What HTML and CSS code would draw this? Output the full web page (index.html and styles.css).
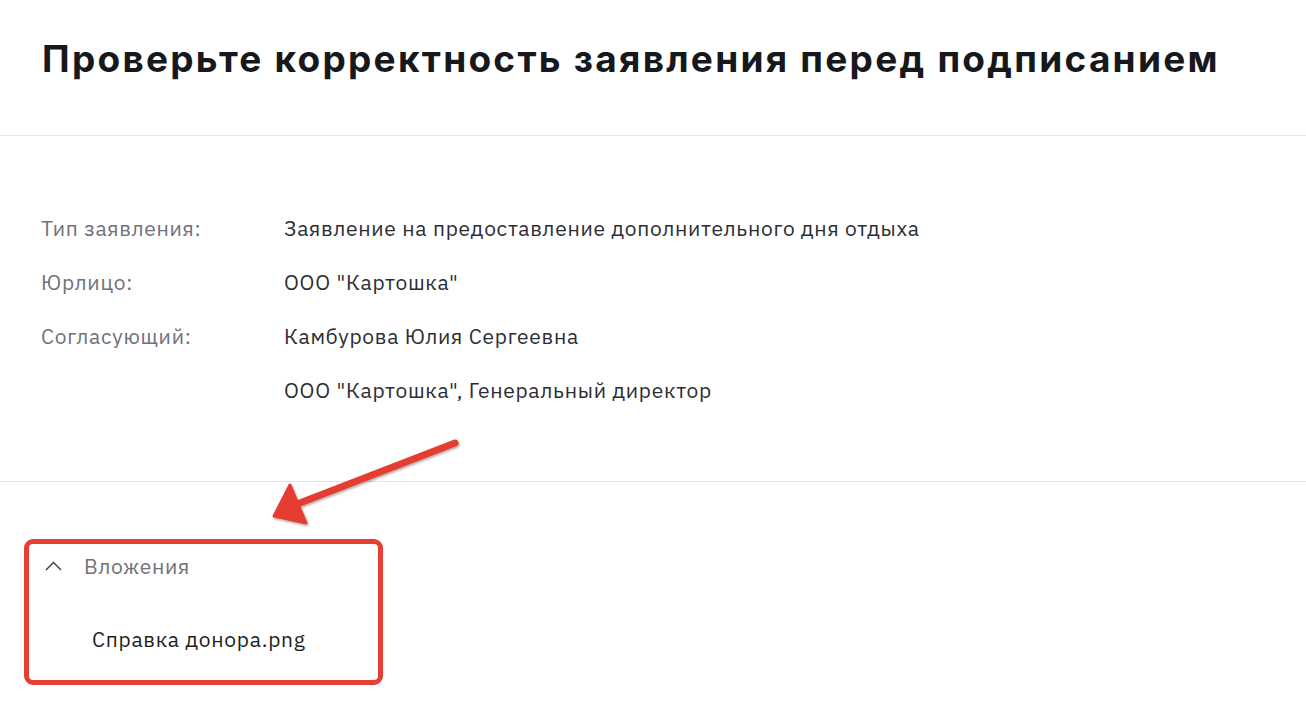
FILE: index.html
```
<!DOCTYPE html>
<html lang="ru">
<head>
  <meta charset="UTF-8" />
  <meta name="viewport" content="width=device-width, initial-scale=1.0"/>
  <title>Проверка заявления</title>
  <link rel="stylesheet" href="styles.css">
</head>
<body>

  <div class="page">
    <div class="header">
      <h1 class="title">Проверьте корректность заявления перед подписанием</h1>
    </div>

    <div class="details">
      <div class="label">Тип заявления:</div>
      <div class="value">Заявление на предоставление дополнительного дня отдыха</div>

      <div class="label">Юрлицо:</div>
      <div class="value">ООО "Картошка"</div>

      <div class="label">Согласующий:</div>
      <div class="value">Камбурова Юлия Сергеевна</div>

      <div class="label"></div>
      <div class="value">ООО "Картошка", Генеральный директор</div>
    </div>

    <div class="attachments">
      <div class="toggle">
        <svg class="chevron" width="17" height="10" viewBox="0 0 17 10">
          <path d="M1 9 L8.5 1.5 L16 9" fill="none" stroke="#3a3d42" stroke-width="1.4"/>
        </svg>
        <span>Вложения</span>
      </div>
      <div class="file">Справка донора.png</div>
    </div>

    <!-- annotation arrow -->
    <svg class="arrow" width="1306" height="718" viewBox="0 0 1306 718">
      <defs>
        <filter id="shadow" x="-10%" y="-10%" width="130%" height="130%">
          <feDropShadow dx="1" dy="1.5" stdDeviation="1" flood-color="#000" flood-opacity="0.35"/>
        </filter>
      </defs>
      <g filter="url(#shadow)" fill="#e53e32">
        <line x1="455" y1="443" x2="292" y2="506" stroke="#e53e32" stroke-width="7" stroke-linecap="round"/>
        <polygon points="274,516 290,485 306,523" stroke="#e53e32" stroke-width="3" stroke-linejoin="round"/>
      </g>
    </svg>
  </div>

</body>
</html>
```

FILE: styles.css
```
body {
  margin: 0;
  padding: 0;
  background: #ffffff;
  font-family: 'IBM Plex Sans', 'Noto Sans', sans-serif;
  color: #2b2e33;
}

.page {
  position: relative;
  min-height: 718px;
}

.header {
  height: 98px;
  padding: 37px 42px 0;
  border-bottom: 1px solid #e3e5e9;
}

.title {
  margin: 0;
  font-family: 'Inter', sans-serif;
  font-size: 37px;
  line-height: 44px;
  font-weight: 700;
  color: #16181b;
  letter-spacing: 2.25px;
  white-space: nowrap;
}

.details {
  display: grid;
  grid-template-columns: 243px 1fr;
  row-gap: 30px;
  padding: 80px 41px 79px;
  border-bottom: 1px solid #e3e5e9;
  font-size: 21px;
  line-height: 24px;
  letter-spacing: 0.72px;
}

.label {
  color: #6e7279;
}

.value {
  color: #2b2e33;
}

.attachments {
  width: 349px;
  margin: 57px 0 0 24px;
  padding: 10px 0 29px;
  border: 5px solid #e53e32;
  border-radius: 9px;
  font-size: 21px;
  line-height: 24px;
  letter-spacing: 0.72px;
}

.toggle {
  display: flex;
  align-items: center;
  gap: 22px;
  padding-left: 16px;
  color: #6e7279;
}

.file {
  margin-top: 49px;
  padding-left: 63px;
  color: #1d1f22;
}

.arrow {
  position: absolute;
  left: 0;
  top: 0;
  pointer-events: none;
}
```
